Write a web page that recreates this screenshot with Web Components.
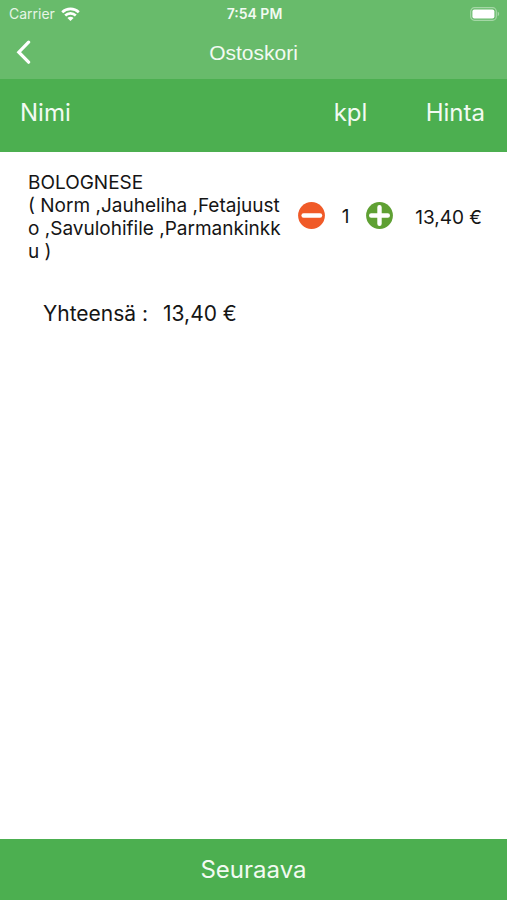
<!DOCTYPE html>
<html lang="fi">
<head>
<meta charset="utf-8">
<meta name="viewport" content="width=device-width, initial-scale=1">
<title>Ostoskori</title>
<style>
  html, body { margin: 0; height: 100%; }
  body {
    --bar: #68bb6b;
    --brand: #4caf50;
    font-family: Inter, "Liberation Sans", sans-serif;
    color: #151515;
    background: #fff;
  }
</style>
</head>
<body>
<cart-screen>
  <status-bar slot="top" carrier="Carrier" time="7:54 PM"></status-bar>
  <nav-bar slot="top">Ostoskori</nav-bar>
  <cart-table></cart-table>
  <cart-total label="Yhteensä :">13,40 €</cart-total>
  <action-button slot="bottom">Seuraava</action-button>
</cart-screen>

<script>
class BaseElement extends HTMLElement {
  connectedCallback() {
    if (!this.shadowRoot) this.attachShadow({ mode: "open" }).innerHTML = this.render();
  }
}

customElements.define("cart-screen", class extends BaseElement {
  render() {
    return `
      <style>
        :host { display: flex; flex-direction: column; min-height: 100%; }
        main { flex: 1; }
      </style>
      <header><slot name="top"></slot></header>
      <main><slot></slot></main>
      <footer><slot name="bottom"></slot></footer>`;
  }
});

customElements.define("status-bar", class extends BaseElement {
  render() {
    return `
      <style>
        :host { display: grid; grid-template-columns: 1fr auto 1fr; align-items: center;
          height: 27px; padding: 0 7px 0 9px; background: var(--bar); color: #fff;
          font-size: 14px; line-height: 16px; }
        .left { display: flex; align-items: center; gap: 6px; color: #e6f5e6; }
        .time { font-weight: 600; color: #f2faf2; }
        .battery { justify-self: end; }
        svg { display: block; }
      </style>
      <span class="left"><span>${this.getAttribute("carrier")}</span>
        <svg width="19" height="14" viewBox="0 0 19 14" fill="none" stroke="#fff" stroke-width="2.6" aria-hidden="true">
          <path d="M1.2 5.2C5.8 .7 13.2 .7 17.8 5.2"/>
          <path d="M4.2 8.5C7.2 5.6 11.8 5.6 14.8 8.5"/>
          <path d="M6.4 10.9C8.2 9.2 10.8 9.2 12.6 10.9L9.5 13.9Z" fill="#fff" stroke="none"/>
        </svg>
      </span>
      <span class="time">${this.getAttribute("time")}</span>
      <svg class="battery" width="31" height="14" viewBox="0 0 31 14" aria-hidden="true">
        <rect x="1.7" y=".7" width="25.6" height="12.6" rx="3.8" fill="none" stroke="#a5d7a6" stroke-width="1.2"/>
        <rect x="3.4" y="2.6" width="22" height="8.8" rx="2" fill="#fff"/>
        <path d="M28.7 4.8C30.6 5.4 30.6 8.6 28.7 9.2Z" fill="#a5d7a6"/>
      </svg>`;
  }
});

customElements.define("nav-bar", class extends BaseElement {
  render() {
    return `
      <style>
        :host { display: grid; grid-template-columns: 1fr auto 1fr; align-items: center;
          height: 52px; padding: 0 12px; background: var(--bar); color: #f2faf2; }
        button { justify-self: start; display: flex; padding: 0 4px; border: 0; background: none; cursor: pointer; }
        h1 { margin: 0; font: 400 21px/24px "Liberation Sans", sans-serif; }
      </style>
      <button type="button" aria-label="Takaisin">
        <svg width="16" height="26" viewBox="0 0 16 26" fill="none" stroke="#fff" stroke-width="3.2" stroke-linecap="round" stroke-linejoin="miter" aria-hidden="true">
          <path d="M12.6 2.2L2.8 12.2L12.6 22.2"/>
        </svg>
      </button>
      <h1><slot></slot></h1>`;
  }
});

customElements.define("round-button", class extends BaseElement {
  render() {
    const add = this.getAttribute("kind") === "add";
    return `
      <style>
        :host { display: block; }
        button { display: block; padding: 0; border: 0; border-radius: 50%; background: none; cursor: pointer; }
        svg { display: block; }
      </style>
      <button type="button" aria-label="${add ? "Lisää" : "Vähennä"}">
        <svg width="27" height="27" viewBox="0 0 27 27" aria-hidden="true">
          <circle cx="13.5" cy="13.5" r="13.4" fill="${add ? "#5fa033" : "#f05a28"}"/>
          <path d="${add ? "M5.2 13.5H21.8M13.5 5.2V21.8" : "M5.6 13.5H22"}" stroke="#fff" stroke-width="4.4" stroke-linecap="round"/>
        </svg>
      </button>`;
  }
});

customElements.define("quantity-stepper", class extends BaseElement {
  render() {
    return `
      <style>
        :host { display: flex; align-items: center; justify-content: space-between; height: 27px; }
        output { font-size: 19px; line-height: 28px; padding-top: 4px; }
      </style>
      <round-button kind="remove"></round-button>
      <output><slot></slot></output>
      <round-button kind="add"></round-button>`;
  }
});

customElements.define("cart-table", class extends BaseElement {
  render() {
    return `
      <style>
        :host { display: block; }
        table { width: 100%; border-collapse: collapse; table-layout: fixed; }
        .qty { width: 95px; }
        .price { width: 114px; }
        th { height: 73px; padding: 0 0 6px; box-sizing: border-box; background: var(--brand); color: #f2faf2;
          font-weight: 400; font-size: 24px; line-height: 28px; }
        th:first-child { text-align: left; padding-left: 20px; }
        th:nth-child(2) { padding-left: 10px; }
        th:last-child { text-align: right; padding-right: 22px; }
        td { padding: 19px 0 4px; font-size: 19px; line-height: 23px; }
        .name { padding-bottom: 0; padding-left: 28px; padding-right: 15px; word-break: break-all; }
        .amount { text-align: right; padding-right: 25px; padding-top: 20px; padding-bottom: 0; white-space: nowrap; }
      </style>
      <table>
        <colgroup><col><col class="qty"><col class="price"></colgroup>
        <thead><tr><th scope="col">Nimi</th><th scope="col">kpl</th><th scope="col">Hinta</th></tr></thead>
        <tbody><tr>
          <td class="name">BOLOGNESE<br>( Norm ,Jauheliha ,Fetajuusto ,Savulohifile ,Parmankinkku )</td>
          <td><quantity-stepper>1</quantity-stepper></td>
          <td class="amount">13,40 €</td>
        </tr></tbody>
      </table>`;
  }
});

customElements.define("cart-total", class extends BaseElement {
  render() {
    return `
      <style>
        :host { display: flex; gap: 15px; padding: 38px 43px 0; font-size: 21px; line-height: 26px; }
      </style>
      <span>${this.getAttribute("label")}</span><span><slot></slot></span>`;
  }
});

customElements.define("action-button", class extends BaseElement {
  render() {
    return `
      <style>
        :host { display: block; }
        button { display: block; width: 100%; padding: 17px 0 16px; border: 0; background: var(--brand);
          color: #f2faf2; font: inherit; font-size: 24px; line-height: 28px; cursor: pointer; }
      </style>
      <button type="button"><slot></slot></button>`;
  }
});
</script>
</body>
</html>
